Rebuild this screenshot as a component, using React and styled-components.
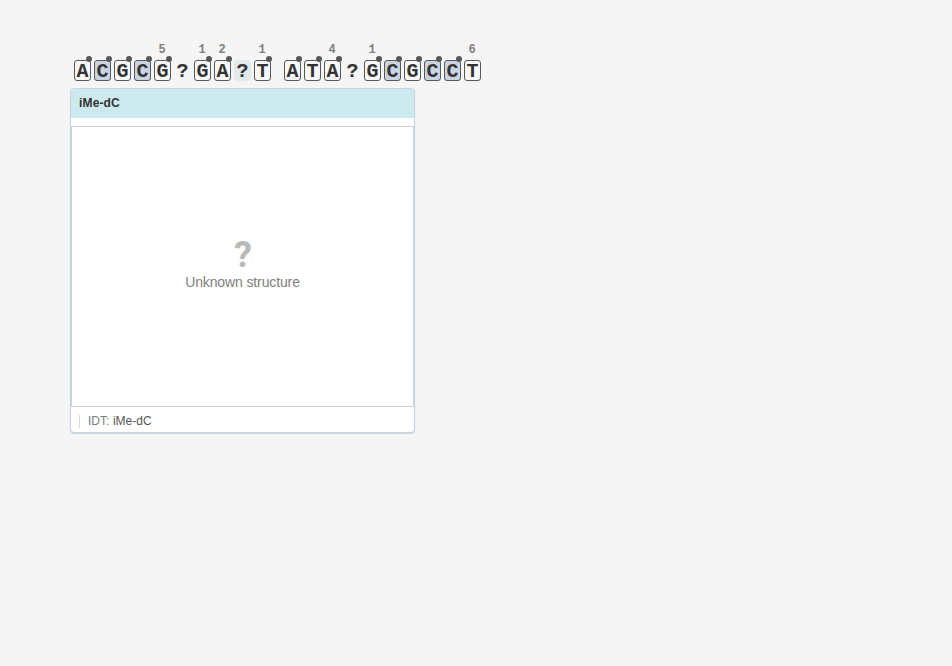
import React from "react";
import styled, { createGlobalStyle } from "styled-components";

const GlobalStyle = createGlobalStyle`
  * { box-sizing: border-box; }
  body {
    margin: 0;
    min-height: 100vh;
    background: #f5f5f5;
    font-family: "Liberation Sans", Arial, sans-serif;
  }
`;

const Editor = styled.main`
  padding: 42px 0 0 70px;
`;

const Sequence = styled.div`
  display: flex;
  gap: 13px;
  padding-left: 4px;
`;

const Group = styled.div`
  display: flex;
  gap: 3px;
`;

const Position = styled.div`
  display: flex;
  flex-direction: column;
  align-items: center;
  width: 17px;
  font-family: "Liberation Mono", "Courier New", monospace;
  font-weight: 700;
`;

const Count = styled.span`
  height: 18px;
  padding-right: 1px;
  color: #808080;
  font-size: 12px;
  line-height: 16px;
`;

const Letter = styled.span`
  position: relative;
  display: flex;
  justify-content: center;
  width: 17px;
  height: 21px;
  border: 1px solid ${({ $kind }) => ({ plain: "transparent", hover: "#e1e9eb" })[$kind] || "#585858"};
  border-radius: 3px;
  background: ${({ $kind }) => ({ modified: "#cad3e0", hover: "#e1e9eb", plain: "transparent" })[$kind] || "#f8f8f8"};
  color: #333;
  font-size: 20px;
  line-height: 21px;
`;

const Link = styled.i`
  position: absolute;
  top: -4.6px;
  right: -1.6px;
  width: 6px;
  height: 6px;
  border-radius: 50%;
  background: #585858;
`;

const Card = styled.section`
  display: flex;
  flex-direction: column;
  width: 345px;
  height: 345px;
  margin-top: 7px;
  overflow: hidden;
  border: 1px solid #c9d3e0;
  border-radius: 4px;
  background: #fff;
  box-shadow: 0 1px 1px #cad3dd;
`;

const Title = styled.header`
  height: 29px;
  padding-left: 8px;
  background: #cce9ed;
  color: #333;
  font-size: 12px;
  font-weight: 700;
  letter-spacing: 0.15px;
  line-height: 28px;
`;

const Structure = styled.div`
  display: flex;
  flex-direction: column;
  flex-shrink: 0;
  align-items: center;
  height: 281px;
  margin-top: 8px;
  padding-top: 107px;
  border: 1px solid #c9d3e0;
`;

const Unknown = styled.div`
  height: 40px;
  padding-left: 1px;
  color: #b9b9b9;
  font-family: Roboto, sans-serif;
  font-size: 36px;
  font-weight: 700;
  line-height: 43px;
`;

const Caption = styled.div`
  color: #808080;
  font-size: 14px;
  letter-spacing: -0.12px;
  line-height: 16px;
`;

const Footer = styled.footer`
  display: flex;
  align-items: center;
  height: 25px;
  padding: 3px 0 0 8px;
`;

const Alias = styled.div`
  height: 13px;
  padding-left: 8px;
  border-left: 1px solid #d8d8dc;
  color: #7c7c7c;
  font-size: 12px;
  letter-spacing: 0.04px;
  line-height: 13px;
`;

const AliasName = styled.span`
  color: #555;
`;

const groups = [
  {
    letters: "ACGCG?GA?T",
    counts: { 4: 5, 6: 1, 7: 2, 9: 1 },
    highlighted: 8,
  },
  { letters: "ATA?GCGCCT", counts: { 2: 4, 4: 1, 9: 6 }, last: true },
];

function kindOf(letter, highlighted) {
  if (highlighted) return "hover";
  if (letter === "?") return "plain";
  return letter === "C" ? "modified" : "base";
}

export default function App() {
  return (
    <>
      <GlobalStyle />
      <Editor>
        <Sequence>
          {groups.map((group, g) => (
            <Group key={g}>
              {[...group.letters].map((letter, i) => (
                <Position key={i}>
                  <Count>{group.counts[i]}</Count>
                  <Letter $kind={kindOf(letter, group.highlighted === i)}>
                    {letter}
                    {letter !== "?" && !(group.last && i === 9) && <Link />}
                  </Letter>
                </Position>
              ))}
            </Group>
          ))}
        </Sequence>
        <Card>
          <Title>iMe-dC</Title>
          <Structure>
            <Unknown>?</Unknown>
            <Caption>Unknown structure</Caption>
          </Structure>
          <Footer>
            <Alias>IDT: <AliasName>iMe-dC</AliasName></Alias>
          </Footer>
        </Card>
      </Editor>
    </>
  );
}
